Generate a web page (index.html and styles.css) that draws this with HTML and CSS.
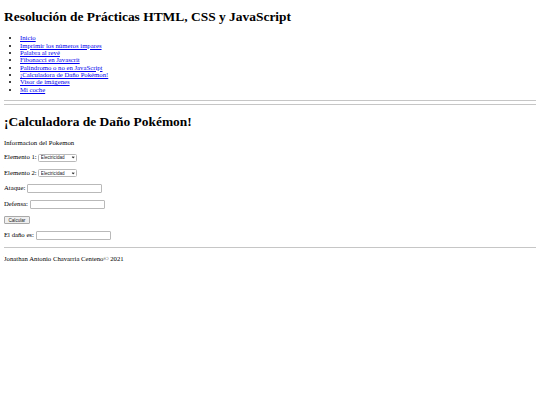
FILE: index.html
```html
<!DOCTYPE html>
<html lang="es">
<head>
<meta charset="utf-8">
<title>Calculadora de Daño Pokémon</title>
<link rel="stylesheet" href="styles.css">
</head>
<body class="page">
<header class="site-header">
<h1 class="title title-top">Resolución de Prácticas HTML, CSS y JavaScript</h1>
<nav class="menu">
<ul class="menu-list">
<li><a class="menu-link" href="#">Inicio</a></li>
<li><a class="menu-link" href="#">Imprimir los números impares</a></li>
<li><a class="menu-link" href="#">Palabra al revé</a></li>
<li><a class="menu-link" href="#">Fibonacci en Javascrit</a></li>
<li><a class="menu-link" href="#">Palíndromo o no en JavaScript</a></li>
<li><a class="menu-link" href="#">¡Calculadora de Daño Pokémon!</a></li>
<li><a class="menu-link" href="#">Visor de imágenes</a></li>
<li><a class="menu-link" href="#">Mi coche</a></li>
</ul>
</nav>
<hr class="rule">
</header>
<main class="content">
<hr class="rule">
<h1 class="title">¡Calculadora de Daño Pokémon!</h1>
<p class="row">Informacion del Pokemon</p>
<p class="row">Elemento 1: <span class="select-wrap"><select class="field-select"><option>Electricidad</option></select></span></p>
<p class="row">Elemento 2: <span class="select-wrap"><select class="field-select"><option>Electricidad</option></select></span></p>
<p class="row">Ataque: <input class="field-input" type="text"></p>
<p class="row">Defensa: <input class="field-input" type="text"></p>
<p class="row"><button class="btn" type="button">Calcular</button></p>
<p class="row">El daño es: <input class="field-input" type="text"></p>
</main>
<footer class="site-footer">
<hr class="rule">
<p class="row">Jonathan Antonio Chavarria Centeno© 2021</p>
</footer>
</body>
</html>
```

FILE: styles.css
```css
.page {
  margin: 3.4px 4px;
  font-family: "Liberation Serif", "Times New Roman", serif;
  font-size: 6.72px;
  color: #000;
  background: #fff;
}
.title {
  font-size: 13.44px;
  font-weight: bold;
  margin: 9px 0;
}
.title-top {
  margin-top: 6px;
}
.menu-list {
  margin: 6.72px 0;
  padding-left: 16px;
  line-height: 7.35px;
}
.menu-link {
  color: #0000ee;
}
.rule {
  margin: 3.4px 0;
  height: 0;
  border: 0;
  border-top: 1px solid #c6c6c6;
}
.row {
  margin: 7px 0;
}
.select-wrap {
  position: relative;
  display: inline-block;
  vertical-align: middle;
  line-height: 0;
}
.select-wrap::after {
  content: "";
  position: absolute;
  right: 3px;
  top: 2.6px;
  width: 1.4px;
  height: 1.4px;
  border-right: 0.8px solid #333;
  border-bottom: 0.8px solid #333;
  transform: rotate(45deg);
  pointer-events: none;
}
.field-select {
  -webkit-appearance: none;
  appearance: none;
  box-sizing: border-box;
  font-family: "Liberation Sans", Arial, sans-serif;
  font-size: 4.6px;
  width: 39px;
  height: 8px;
  padding: 0 0 0 1.5px;
  margin: 0;
  border: 1px solid #b9b9b9;
  border-radius: 1.5px;
  background: #fff;
  color: #222;
}
.field-input {
  box-sizing: border-box;
  width: 75px;
  height: 8.5px;
  padding: 0;
  border: 1px solid #b9b9b9;
  border-radius: 1px;
  background: #fff;
  vertical-align: middle;
}
.btn {
  font-family: "Liberation Sans", Arial, sans-serif;
  font-size: 4.6px;
  height: 8px;
  padding: 0 3.5px;
  border: 1px solid #a9a9a9;
  border-radius: 1px;
  background: #efefef;
  color: #222;
}
```
